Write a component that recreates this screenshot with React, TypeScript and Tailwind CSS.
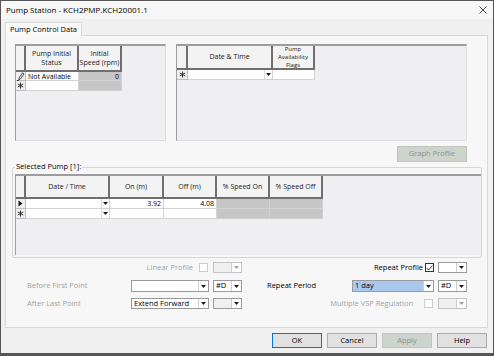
import React from "react";

const Caret = ({ dim }: { dim?: boolean }) => (
  <svg width="5" height="3" viewBox="0 0 5 3">
    <path d="M0 0h5L2.5 3z" fill={dim ? "#a0a0a0" : "#1a1a1a"} />
  </svg>
);

const Star = () => (
  <svg width="7" height="7" viewBox="0 0 7 7" stroke="#333" strokeWidth="1">
    <path d="M3.5 0.5v6M0.8 2l5.4 3M0.8 5l5.4-3" />
  </svg>
);

const Pencil = () => (
  <svg width="8" height="9" viewBox="0 0 8 9" fill="none" stroke="#222" strokeWidth="0.8">
    <path d="M5.5 0.8l1.5 1.2-3.6 5-1.6 0.8 0.2-1.8z" />
    <path d="M0 8.5h2" />
  </svg>
);

const Pointer = () => (
  <svg width="5" height="7" viewBox="0 0 5 7">
    <path d="M0.5 0.5l4 3-4 3z" fill="#111" />
  </svg>
);

function Combo({
  className,
  text,
  field = "bg-white",
  dim,
}: {
  className: string;
  text?: string;
  field?: string;
  dim?: boolean;
}) {
  return (
    <div className={`flex border ${dim ? "border-[#c4c4c4]" : "border-[#9a9a9a]"} ${className}`}>
      <div className={`flex-1 flex items-center pl-[2px] text-[7.5px] leading-none ${field}`}>{text}</div>
      <div className="w-[10px] flex items-center justify-center bg-white border-l border-[#cfcfcf]">
        <Caret dim={dim} />
      </div>
    </div>
  );
}

function Check({ checked, dim }: { checked?: boolean; dim?: boolean }) {
  return (
    <div
      className={`w-[9px] h-[9px] border bg-white flex items-center justify-center ${
        dim ? "border-[#cccccc]" : "border-[#333333]"
      }`}
    >
      {checked && (
        <svg width="7" height="6" viewBox="0 0 7 6" fill="none" stroke="#222" strokeWidth="0.9">
          <path d="M0.6 3l2 2 3.8-4.4" />
        </svg>
      )}
    </div>
  );
}

const Head = ({ w, children, tight }: { w: string; children?: React.ReactNode; tight?: boolean }) => (
  <div
    className={`${w} h-full shrink-0 border-r-2 border-b-2 border-[#6f6f6f] bg-[#f3f3f3] flex items-center justify-center text-center ${
      tight ? "text-[6px] leading-[8.2px]" : "text-[7px] leading-[9.5px]"
    } text-[#222]`}
  >
    {children}
  </div>
);

const RowHead = ({ w, children }: { w: string; children?: React.ReactNode }) => (
  <div className={`${w} h-full shrink-0 border-r border-b border-[#bdbdbd] flex items-center justify-center`}>
    {children}
  </div>
);

const Cell = ({
  w,
  children,
  grey,
  right,
  drop,
}: {
  w: string;
  children?: React.ReactNode;
  grey?: boolean;
  right?: boolean;
  drop?: boolean;
}) => (
  <div
    className={`${w} h-full shrink-0 border-r border-b border-[#d2d2d2] ${
      grey ? "bg-[#c6c6c6]" : "bg-white"
    } flex items-center ${right ? "justify-end pr-[2px]" : "pl-[2px]"} text-[7px] leading-none`}
  >
    {drop ? (
      <div className="ml-auto w-[8px] h-full flex items-center justify-center border-l border-[#dadada] bg-white">
        <Caret />
      </div>
    ) : (
      children
    )}
  </div>
);

export default function App() {
  return (
    <div className="w-[494px] h-[356px] overflow-hidden bg-[#f0f0f0] border border-[#555555] border-b-[3px] flex flex-col font-['Segoe_UI','Open_Sans',sans-serif] text-black">
      {/* title bar */}
      <div className="h-[18px] shrink-0 bg-[#f7f7f7] flex items-center justify-between pl-[5px] pr-[6px]">
        <span className="text-[8px] leading-none">Pump Station - KCH2PMP.KCH20001.1</span>
        <svg width="8" height="8" viewBox="0 0 8 8" stroke="#333" strokeWidth="0.9">
          <path d="M0.5 0.5l7 7M7.5 0.5l-7 7" />
        </svg>
      </div>

      <div className="flex-1 flex flex-col pl-[4px]">
        <div className="mt-[3px] self-start h-[14px] px-[4px] border border-b-0 border-[#d9d9d9] bg-[#f9f9f9] flex items-center text-[7.5px] leading-none relative z-10">
          Pump Control Data
        </div>
        <div className="-mt-px w-[483px] h-[293px] border border-[#d9d9d9] bg-[#f7f7f7] flex flex-col">
          {/* top grids */}
          <div className="flex gap-[10px] ml-[9px] mt-[8px]">
            <div className="w-[151px] h-[97px] bg-[#efeef0] border-t-2 border-l border-[#9d9d9d] border-r border-r-[#dddddd] border-b border-b-[#dddddd] flex flex-col">
              <div className="h-[26px] flex">
                <Head w="w-[10px]" />
                <Head w="w-[53px]">
                  Pump Initial
                  <br />
                  Status
                </Head>
                <Head w="w-[43px]">
                  Initial
                  <br />
                  Speed (rpm)
                </Head>
              </div>
              <div className="h-[9px] flex">
                <RowHead w="w-[10px]">
                  <Pencil />
                </RowHead>
                <Cell w="w-[53px]">Not Available</Cell>
                <Cell w="w-[43px]" grey right>
                  0
                </Cell>
              </div>
              <div className="h-[10px] flex">
                <RowHead w="w-[10px]">
                  <Star />
                </RowHead>
                <Cell w="w-[53px]" />
                <Cell w="w-[43px]" grey />
              </div>
            </div>

            <div className="w-[291px] h-[97px] bg-[#efeef0] border-t-2 border-l border-[#9d9d9d] border-r border-r-[#dddddd] border-b border-b-[#dddddd] flex flex-col">
              <div className="h-[24px] flex">
                <Head w="w-[11px]" />
                <Head w="w-[85px]">Date &amp; Time</Head>
                <Head w="w-[42px]" tight>
                  Pump
                  <br />
                  Availability
                  <br />
                  Flags
                </Head>
              </div>
              <div className="h-[10px] flex">
                <RowHead w="w-[11px]">
                  <Star />
                </RowHead>
                <Cell w="w-[85px]" drop />
                <Cell w="w-[42px]" />
              </div>
            </div>
          </div>

          {/* graph profile */}
          <div className="w-[461px] flex justify-end mt-[5px]">
            <div className="w-[70px] h-[16px] border border-[#bfc7bf] bg-[#ccd4cc] flex items-center justify-center text-[7.5px] text-[#8c938c] leading-none">
              Graph Profile
            </div>
          </div>

          {/* selected pump group */}
          <div className="relative ml-[6px] mt-[5px] w-[470px] h-[91px] border border-[#d6d6d6] rounded-[2px]">
            <div className="absolute -top-[6px] left-[2px] px-px bg-[#f7f7f7] text-[7.5px] leading-[9px]">
              Selected Pump [1]:
            </div>
            <div className="ml-[2px] mt-[6px] w-[466px] h-[81px] bg-[#efeef0] border-t-2 border-l border-[#9d9d9d] flex flex-col">
              <div className="h-[23px] flex">
                <Head w="w-[10px]" />
                <Head w="w-[84px]">Date / Time</Head>
                <Head w="w-[54px]">On (m)</Head>
                <Head w="w-[53px]">Off (m)</Head>
                <Head w="w-[53px]">% Speed On</Head>
                <Head w="w-[53px]">% Speed Off</Head>
              </div>
              <div className="h-[10px] flex">
                <RowHead w="w-[10px]">
                  <Pointer />
                </RowHead>
                <Cell w="w-[84px]" drop />
                <Cell w="w-[54px]" right>
                  3.92
                </Cell>
                <Cell w="w-[53px]" right>
                  4.08
                </Cell>
                <Cell w="w-[53px]" grey />
                <Cell w="w-[53px]" grey />
              </div>
              <div className="h-[10px] flex">
                <RowHead w="w-[10px]">
                  <Star />
                </RowHead>
                <Cell w="w-[84px]" drop />
                <Cell w="w-[54px]" />
                <Cell w="w-[53px]" />
                <Cell w="w-[53px]" grey />
                <Cell w="w-[53px]" grey />
              </div>
            </div>
          </div>

          {/* profile options */}
          <div className="mt-[4px] flex items-center h-[11px] text-[7.5px] leading-none">
            <div className="w-[187px] text-right text-[#a3a3a3]">Linear Profile</div>
            <div className="ml-[6px]">
              <Check dim />
            </div>
            <Combo className="ml-[5px] w-[29px] h-[11px]" field="bg-[#f0f0f0]" dim />
            <div className="w-[181px] text-right">Repeat Profile</div>
            <div className="ml-[2px]">
              <Check checked />
            </div>
            <Combo className="ml-[4px] w-[29px] h-[11px]" />
          </div>

          <div className="mt-[7px] flex items-center h-[12px] text-[7.5px] leading-none">
            <div className="ml-[21px] w-[104px] text-[#a3a3a3]">Before First Point</div>
            <Combo className="w-[78px] h-[12px]" />
            <Combo className="ml-[4px] w-[29px] h-[12px]" text="#D" />
            <div className="ml-[25px] w-[85px]">Repeat Period</div>
            <Combo className="w-[82px] h-[12px]" text="1 day" field="bg-[#a9c8ee]" />
            <Combo className="ml-[4px] w-[29px] h-[12px]" text="#D" />
          </div>

          <div className="mt-[6px] flex items-center h-[11px] text-[7.5px] leading-none">
            <div className="ml-[21px] w-[104px] text-[#a3a3a3]">After Last Point</div>
            <Combo className="w-[78px] h-[11px]" text="Extend Forward" />
            <Combo className="ml-[4px] w-[29px] h-[11px]" field="bg-[#f0f0f0]" />
            <div className="w-[171px] text-right text-[#a3a3a3]">Multiple VSP Regulation</div>
            <div className="ml-[11px]">
              <Check dim />
            </div>
            <Combo className="ml-[5px] w-[29px] h-[11px]" field="bg-[#f0f0f0]" dim />
          </div>
        </div>

        {/* dialog buttons */}
        <div className="mt-[5px] flex gap-[5px] ml-[267px] text-[7.5px] leading-none">
          <div className="w-[50px] h-[15px] border border-[#0078d7] bg-[#e1e1e1] flex items-center justify-center">OK</div>
          <div className="w-[50px] h-[15px] border border-[#adadad] bg-[#e1e1e1] flex items-center justify-center">Cancel</div>
          <div className="w-[50px] h-[15px] border border-[#bfc7bf] bg-[#ccd4cc] text-[#8c938c] flex items-center justify-center">Apply</div>
          <div className="w-[50px] h-[15px] border border-[#adadad] bg-[#e1e1e1] flex items-center justify-center">Help</div>
        </div>
      </div>
    </div>
  );
}
